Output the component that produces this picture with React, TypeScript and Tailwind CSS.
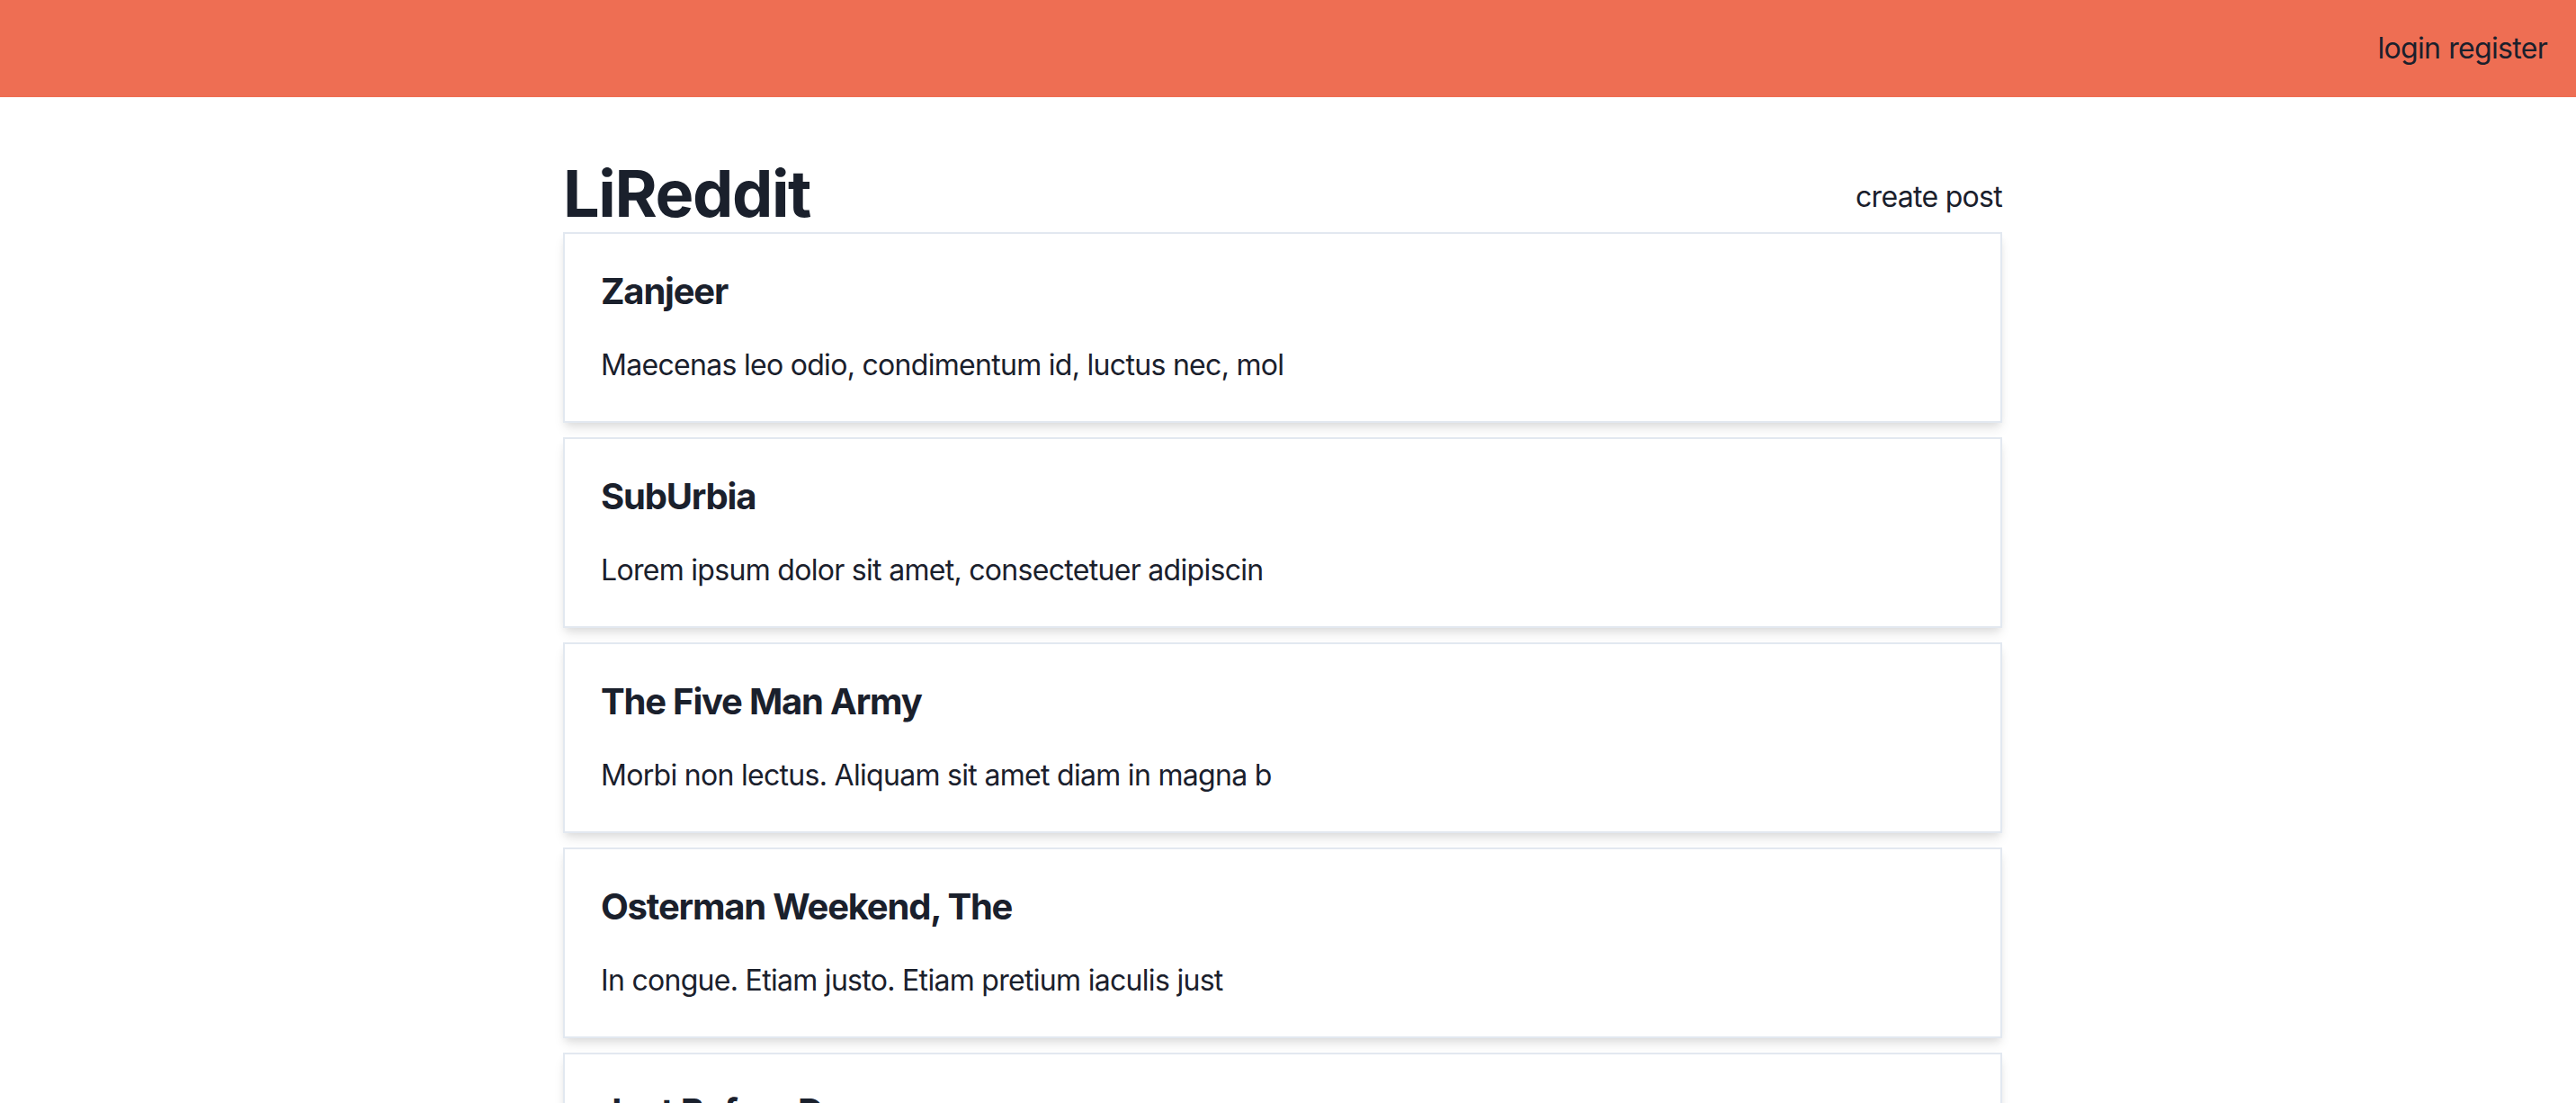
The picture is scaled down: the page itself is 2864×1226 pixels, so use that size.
import React from "react";

const posts = [
  { title: "Zanjeer", text: "Maecenas leo odio, condimentum id, luctus nec, mol" },
  { title: "SubUrbia", text: "Lorem ipsum dolor sit amet, consectetuer adipiscin" },
  { title: "The Five Man Army", text: "Morbi non lectus. Aliquam sit amet diam in magna b" },
  { title: "Osterman Weekend, The", text: "In congue. Etiam justo. Etiam pretium iaculis just" },
  { title: "Just Before Dawn", text: "Vestibulum ante ipsum primis in faucibus orci luct" },
  { title: "Gardens of Stone", text: "Nulla ut erat id mauris vulputate elementum. Nullam" },
];

export default function App() {
  return (
    <div
      className="min-h-screen bg-white text-[#1a202c]"
      style={{ fontFamily: "Inter, 'Noto Sans', sans-serif" }}
    >
      <div className="flex h-[108px] items-center bg-[#ee6e53] px-[32px]">
        <div className="ml-auto flex items-center text-[32px] leading-[44px] tracking-[-0.7px] text-[#1a202c]">
          <a className="mr-[9px]">login</a>
          <a>register</a>
        </div>
      </div>
      <div className="flex justify-center pr-[12px]">
        <div className="mt-[64px] w-[1600px]">
          <div className="flex items-center">
            <h1 className="text-[72px] font-bold leading-[86px] tracking-[-1.4px]">LiReddit</h1>
            <a className="ml-auto mt-[7px] text-[32px] leading-[48px] tracking-[-0.7px]">create post</a>
          </div>
          <div className="flex flex-col gap-[16px]">
            {posts.map((p) => (
              <div
                key={p.title}
                className="border-2 border-[#e2e8f0] bg-white px-[40px] pt-[40px] pb-[38px] shadow-[0_8px_12px_-2px_rgba(0,0,0,0.1),0_4px_8px_-2px_rgba(0,0,0,0.06)]"
              >
                <h2 className="text-[40px] font-bold leading-[48px] tracking-[-1.2px]">{p.title}</h2>
                <p className="mt-[34px] text-[32px] leading-[48px] tracking-[-0.7px]">{p.text}</p>
              </div>
            ))}
          </div>
        </div>
      </div>
    </div>
  );
}
